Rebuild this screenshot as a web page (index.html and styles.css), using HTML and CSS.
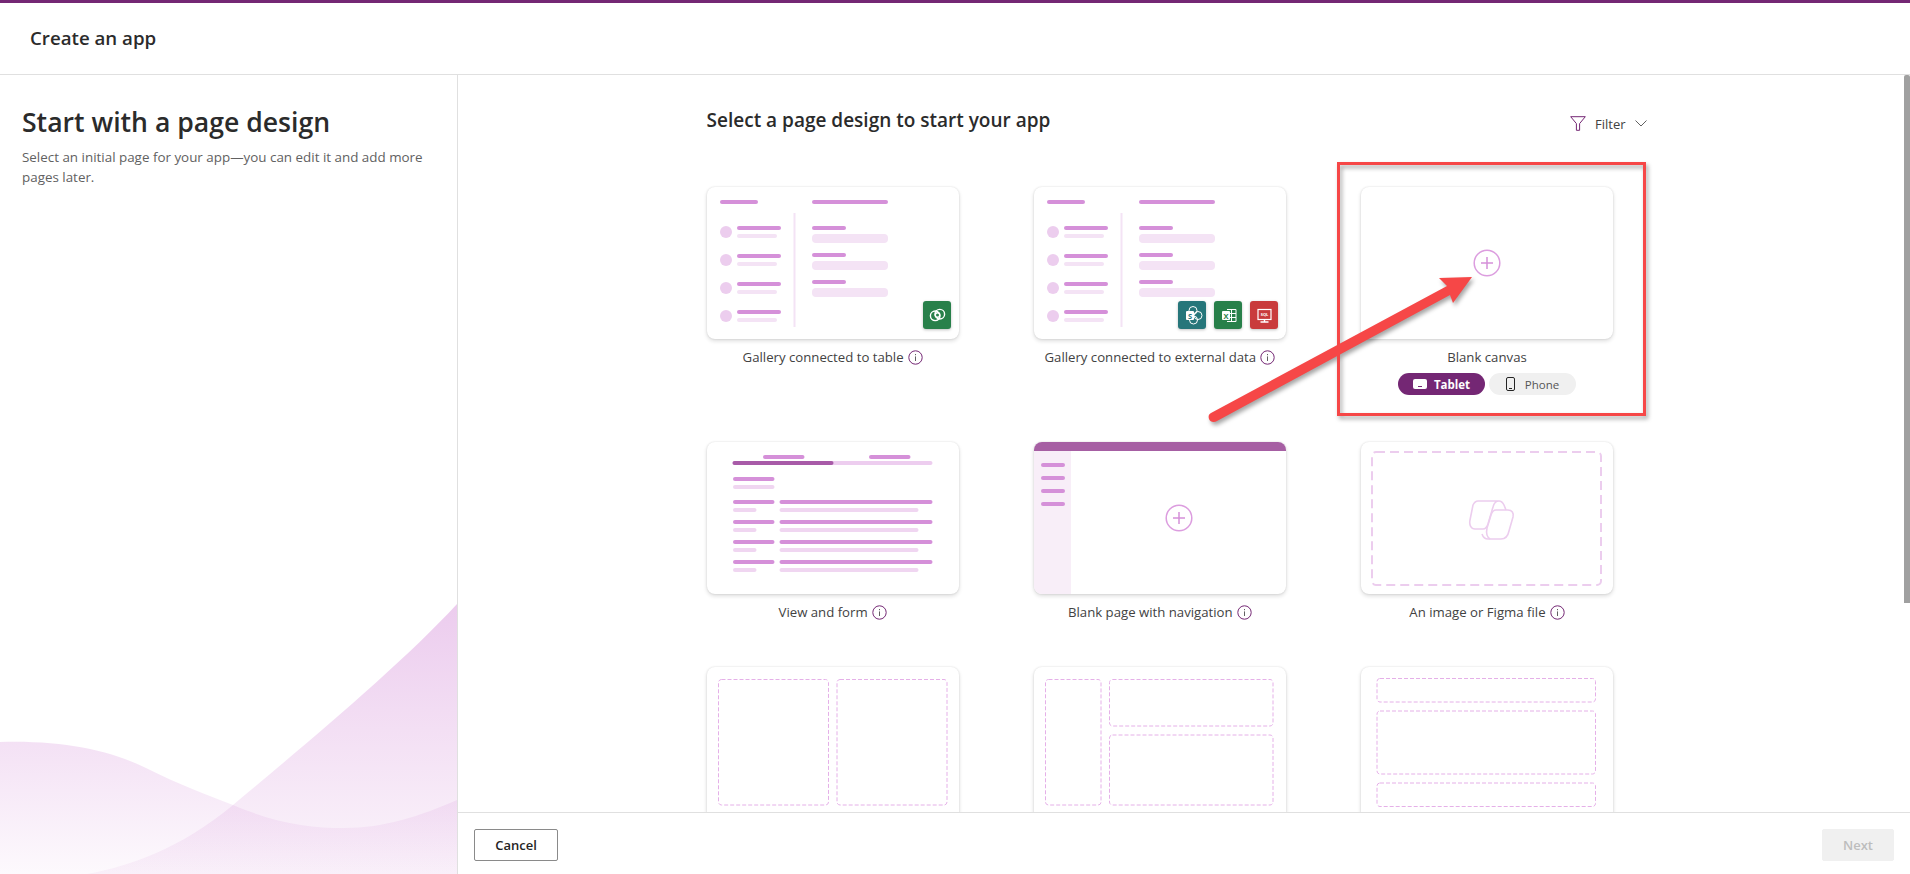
FILE: index.html
```html
<!DOCTYPE html>
<html lang="en">
<head>
  <meta charset="UTF-8">
  <title>Create an app</title>
  <link rel="stylesheet" href="styles.css">
</head>
<body>
  <!-- shared drawings -->
  <svg class="defs">
    <symbol id="info" viewBox="0 0 15 15">
      <circle cx="7.5" cy="7.5" r="6.7" fill="none" stroke="#742774" stroke-width="1"/>
      <rect x="7" y="6.4" width="1" height="4.6" fill="#616161"/>
      <rect x="7" y="4" width="1" height="1.2" fill="#616161"/>
    </symbol>
    <symbol id="plus" viewBox="0 0 28 28">
      <circle cx="14" cy="14" r="12.8" fill="none" stroke="#dc9ddf" stroke-width="1.5"/>
      <path d="M14 8v12M8 14h12" stroke="#d590d9" stroke-width="1.5"/>
    </symbol>
    <symbol id="gallery" viewBox="0 0 252 152">
      <g fill="#d590d9">
        <rect x="13" y="13" width="38" height="4" rx="2"/>
        <rect x="105" y="13" width="76" height="4" rx="2"/>
        <rect x="30" y="39" width="44" height="4" rx="2"/>
        <rect x="30" y="67" width="44" height="4" rx="2"/>
        <rect x="30" y="95" width="44" height="4" rx="2"/>
        <rect x="30" y="123" width="44" height="4" rx="2"/>
        <rect x="105" y="39" width="34" height="4" rx="2"/>
        <rect x="105" y="66" width="34" height="4" rx="2"/>
        <rect x="105" y="93" width="34" height="4" rx="2"/>
      </g>
      <g fill="#f4e3f5">
        <rect x="30" y="47" width="40" height="4" rx="2"/>
        <rect x="30" y="75" width="40" height="4" rx="2"/>
        <rect x="30" y="103" width="40" height="4" rx="2"/>
        <rect x="30" y="131" width="40" height="4" rx="2"/>
        <rect x="105" y="47" width="76" height="9" rx="4"/>
        <rect x="105" y="74" width="76" height="9" rx="4"/>
        <rect x="105" y="101" width="76" height="9" rx="4"/>
        <rect x="86.5" y="26" width="2" height="114"/>
      </g>
      <g fill="#eccdee">
        <circle cx="19" cy="45" r="6"/>
        <circle cx="19" cy="73" r="6"/>
        <circle cx="19" cy="101" r="6"/>
        <circle cx="19" cy="129" r="6"/>
      </g>
    </symbol>
    <symbol id="dataverse" viewBox="0 0 28 28">
      <g fill="none" stroke="#fff" stroke-width="1.4">
        <circle cx="12.200" cy="14.800" r="4.800"/>
        <circle cx="16.800" cy="13.200" r="4.800"/>
        <circle cx="14.500" cy="14" r="2.200"/>
      </g>
    </symbol>
    <symbol id="sharepoint" viewBox="0 0 28 28">
      <g fill="none" stroke="#fff" stroke-width="1">
        <circle cx="15" cy="9.5" r="4"/>
        <circle cx="20" cy="14.5" r="4"/>
        <circle cx="15.5" cy="19" r="4"/>
      </g>
      <rect x="8" y="10" width="8" height="9" rx="1" fill="#fff"/>
      <text x="12" y="17.5" class="glyph" fill="#26767a">S</text>
    </symbol>
    <symbol id="excel" viewBox="0 0 28 28">
      <path d="M13 8.5h9v12h-9M13 12.5h9M13 16.5h9M17.5 8.5v12" fill="none" stroke="#fff" stroke-width="1"/>
      <rect x="8" y="10" width="8" height="9" rx="1" fill="#fff"/>
      <text x="12" y="17.5" class="glyph" fill="#28804a">X</text>
    </symbol>
    <symbol id="sql" viewBox="0 0 28 28">
      <rect x="8" y="8.5" width="13" height="10" fill="none" stroke="#fff" stroke-width="1.2"/>
      <path d="M14.5 18.5v2M10.5 21h8" stroke="#fff" stroke-width="1.4"/>
      <text x="14.5" y="15" class="tiny" fill="#fff">SQL</text>
    </symbol>
  </svg>

  <div class="app">
    <header class="topbar">Create an app</header>

    <div class="body">
      <aside class="intro">
        <h1>Start with a page design</h1>
        <p>Select an initial page for your app—you can edit it and add more pages later.</p>
        <svg class="waves" viewBox="0 0 457 270">
          <defs>
            <linearGradient id="backFill" x1="0" y1="0" x2="0" y2="270" gradientUnits="userSpaceOnUse">
              <stop offset="0" stop-color="#ecccee"/>
              <stop offset="1" stop-color="#fbf5fb"/>
            </linearGradient>
            <linearGradient id="frontFill" x1="0" y1="138" x2="0" y2="270" gradientUnits="userSpaceOnUse">
              <stop offset="0" stop-color="#d590d9" stop-opacity=".27"/>
              <stop offset="1" stop-color="#d590d9" stop-opacity=".05"/>
            </linearGradient>
          </defs>
          <path fill="url(#backFill)" d="M457 0C400 62 300 145 233 201C180 245 130 262 87 270L457 270Z"/>
          <path fill="url(#frontFill)" d="M0 138C60 136 110 146 146 164C180 181 205 190 233 201C275 219 310 224 344 224C385 224 420 212 457 196L457 270L0 270Z"/>
        </svg>
      </aside>

      <main class="picker">
        <div class="scroller">
          <div class="picker-head">
            <h2>Select a page design to start your app</h2>
            <div class="filter">
              <svg class="filter-icon" viewBox="0 0 16 15"><path d="M.7.7h14.6L9.6 7.6v6.7H6.4V7.6z" fill="none" stroke="#742774" stroke-width="1"/></svg>
              <span>Filter</span>
              <svg class="chevron" viewBox="0 0 12 7"><path d="M.5.5 6 6 11.5.5" fill="none" stroke="#616161" stroke-width="1"/></svg>
            </div>
          </div>

          <div class="designs">
            <div class="design">
              <div class="thumb">
                <svg class="art"><use href="#gallery"/></svg>
                <div class="sources">
                  <svg class="source green"><use href="#dataverse"/></svg>
                </div>
              </div>
              <div class="label">Gallery connected to table <svg class="info"><use href="#info"/></svg></div>
            </div>

            <div class="design">
              <div class="thumb">
                <svg class="art"><use href="#gallery"/></svg>
                <div class="sources">
                  <svg class="source teal"><use href="#sharepoint"/></svg>
                  <svg class="source green"><use href="#excel"/></svg>
                  <svg class="source red"><use href="#sql"/></svg>
                </div>
              </div>
              <div class="label">Gallery connected to external data <svg class="info"><use href="#info"/></svg></div>
            </div>

            <div class="design">
              <div class="thumb thumb-center">
                <svg class="plus"><use href="#plus"/></svg>
              </div>
              <div class="label">Blank canvas</div>
              <div class="formats">
                <span class="format active">
                  <svg class="tablet-icon" viewBox="0 0 14 10"><rect width="14" height="10" rx="2" fill="#fff"/><rect x="5" y="7" width="4" height="1" fill="#742774"/></svg>
                  Tablet
                </span>
                <span class="format">
                  <svg class="phone-icon" viewBox="0 0 9 14"><rect x=".5" y=".5" width="8" height="13" rx="1.5" fill="none" stroke="#242424"/><rect x="3" y="11" width="3" height="1" fill="#242424"/></svg>
                  Phone
                </span>
              </div>
            </div>

            <div class="design">
              <div class="thumb">
                <svg class="art" viewBox="0 0 252 152">
                  <g fill="#d590d9">
                    <rect x="56" y="13" width="41.500" height="4" rx="2"/>
                    <rect x="162" y="13" width="41.500" height="4" rx="2"/>
                    <rect x="26" y="35" width="41.500" height="4" rx="2"/>
                    <rect x="26" y="58" width="41.500" height="4" rx="2"/>
                    <rect x="72.500" y="58" width="153" height="4" rx="2"/>
                    <rect x="26" y="78" width="41.500" height="4" rx="2"/>
                    <rect x="72.500" y="78" width="153" height="4" rx="2"/>
                    <rect x="26" y="98" width="41.500" height="4" rx="2"/>
                    <rect x="72.500" y="98" width="153" height="4" rx="2"/>
                    <rect x="26" y="118" width="41.500" height="4" rx="2"/>
                    <rect x="72.500" y="118" width="153" height="4" rx="2"/>
                  </g>
                  <rect x="25.500" y="19" width="200" height="4" rx="2" fill="#edcdef"/>
                  <rect x="25.500" y="19" width="101" height="4" rx="2" fill="#a85ba8"/>
                  <g fill="#f0d6f1">
                    <rect x="26" y="43" width="41.500" height="4" rx="2"/>
                    <rect x="26" y="66" width="23.500" height="4" rx="2"/>
                    <rect x="72.500" y="66" width="139" height="4" rx="2"/>
                    <rect x="26" y="86" width="23.500" height="4" rx="2"/>
                    <rect x="72.500" y="86" width="139" height="4" rx="2"/>
                    <rect x="26" y="106" width="23.500" height="4" rx="2"/>
                    <rect x="72.500" y="106" width="139" height="4" rx="2"/>
                    <rect x="26" y="126" width="23.500" height="4" rx="2"/>
                    <rect x="72.500" y="126" width="139" height="4" rx="2"/>
                  </g>
                </svg>
              </div>
              <div class="label">View and form <svg class="info"><use href="#info"/></svg></div>
            </div>

            <div class="design">
              <div class="thumb">
                <svg class="art" viewBox="0 0 252 152">
                  <rect x="0" y="9" width="37" height="143" fill="#f8eef8"/>
                  <rect width="252" height="9" fill="#a65fa3"/>
                  <g fill="#d590d9">
                    <rect x="7" y="21" width="24" height="4" rx="2"/>
                    <rect x="7" y="34" width="24" height="4" rx="2"/>
                    <rect x="7" y="47" width="24" height="4" rx="2"/>
                    <rect x="7" y="60" width="24" height="4" rx="2"/>
                  </g>
                  <use href="#plus" x="131" y="62" width="28" height="28"/>
                </svg>
              </div>
              <div class="label">Blank page with navigation <svg class="info"><use href="#info"/></svg></div>
            </div>

            <div class="design">
              <div class="thumb">
                <svg class="art" viewBox="0 0 252 152">
                  <rect x="11" y="10" width="229" height="133" rx="4" fill="none" stroke="#eccdee" stroke-width="2" stroke-dasharray="9 5"/>
                  <g fill="none" stroke="#eccdee" stroke-width="1.600" transform="translate(99 48)">
                    <path d="M18 11H39C36 11 34 13 33 17L28 34C27 37 26 39 23 39H15C11 39 9 35 10 30L13 15C14 13 15 11 18 11Z"/>
                    <path d="M39 11C41 11 43 13 44 15L46 20"/>
                    <path d="M36 20H48C52 20 54 23 53 27L49 41C48 46 45 49 41 49H28C25 49 23 47 22 44"/>
                    <path d="M36 20C33 20 32 22 31 25L27 38C26 43 27 47 30 49"/>
                  </g>
                </svg>
              </div>
              <div class="label">An image or Figma file <svg class="info"><use href="#info"/></svg></div>
            </div>

            <div class="design">
              <div class="thumb">
                <svg class="art" viewBox="0 0 252 152">
                  <g class="slot">
                    <rect x="11.500" y="12.500" width="110" height="125.500" rx="3"/>
                    <rect x="130" y="12.500" width="110" height="125.500" rx="3"/>
                  </g>
                </svg>
              </div>
            </div>

            <div class="design">
              <div class="thumb">
                <svg class="art" viewBox="0 0 252 152">
                  <g class="slot">
                    <rect x="11.500" y="12.500" width="55.500" height="125.500" rx="3"/>
                    <rect x="75.500" y="12.500" width="163.500" height="46.500" rx="3"/>
                    <rect x="75.500" y="68" width="163.500" height="70" rx="3"/>
                  </g>
                </svg>
              </div>
            </div>

            <div class="design">
              <div class="thumb">
                <svg class="art" viewBox="0 0 252 152">
                  <g class="slot">
                    <rect x="16" y="11.500" width="218.500" height="23.500" rx="3"/>
                    <rect x="16" y="44" width="218.500" height="63" rx="3"/>
                    <rect x="16" y="116" width="218.500" height="23.500" rx="3"/>
                  </g>
                </svg>
              </div>
            </div>
          </div>
        </div>

        <footer class="actions">
          <button class="btn">Cancel</button>
          <button class="btn btn-next" disabled>Next</button>
        </footer>
        <div class="scrollbar"></div>
      </main>
    </div>

    <!-- red call-out painted on top of the screenshot -->
    <svg class="callout" viewBox="0 0 1910 874">
      <rect x="1338.500" y="163.500" width="306" height="251" fill="none" stroke="#f64747" stroke-width="3"/>
      <path fill="#f64747" d="M1211 413L1447 286L1439 278L1472 277L1453 303L1450 295L1217 421C1214 423 1210 422 1209 419C1208 416 1209 414 1211 413Z"/>
    </svg>
  </div>
</body>
</html>
```

FILE: styles.css
```css
* {
  box-sizing: border-box;
}
html, body {
  margin: 0;
  height: 100%;
  overflow: hidden;
}
body {
  font-family: "Open Sans", "Noto Sans", Arial, sans-serif;
  color: #242424;
  background: #fff;
}
.defs {
  display: none;
}
.glyph {
  font: 700 7.5px "Open Sans", sans-serif;
  text-anchor: middle;
}
.tiny {
  font: 700 4px "Open Sans", sans-serif;
  text-anchor: middle;
}
.app {
  position: relative;
  display: flex;
  flex-direction: column;
  height: 874px;
}
.topbar {
  flex: none;
  height: 75px;
  padding: 0 0 2px 30px;
  display: flex;
  align-items: center;
  border-top: 3px solid #742774;
  border-bottom: 1px solid #e0e0e0;
  font-size: 18.700px;
  font-weight: 600;
  color: #2b2b2b;
}
.body {
  flex: 1;
  display: flex;
  min-height: 0;
}

/* left column */
.intro {
  flex: none;
  width: 458px;
  display: flex;
  flex-direction: column;
  border-right: 1px solid #e0e0e0;
  padding-top: 29px;
}
.intro h1 {
  margin: 0 22px;
  font-size: 26.600px;
  line-height: 36px;
  font-weight: 600;
  color: #2b2b2b;
}
.intro p {
  margin: 7px 22px 0;
  font-size: 13.400px;
  line-height: 20px;
  color: #616161;
}
.waves {
  display: block;
  margin-top: auto;
  width: 457px;
  height: 270px;
}

/* right column */
.picker {
  flex: 1;
  min-width: 0;
  position: relative;
  display: flex;
  flex-direction: column;
}
.scroller {
  flex: 1;
  min-height: 0;
  overflow: hidden;
  padding: 31px 0 0 248.600px;
}
.picker-head {
  width: 940px;
  height: 28px;
  display: flex;
  align-items: center;
  justify-content: space-between;
}
.picker-head h2 {
  margin: 0;
  font-size: 19px;
  line-height: 28px;
  font-weight: 600;
  color: #2b2b2b;
}
.filter {
  display: flex;
  align-items: center;
  gap: 9px;
  font-size: 13px;
  color: #424242;
  margin-top: 7px;
}
.filter-icon {
  width: 16px;
  height: 15px;
}
.chevron {
  width: 12px;
  height: 7px;
}
.designs {
  display: grid;
  grid-template-columns: repeat(3, 252px);
  column-gap: 75.200px;
  row-gap: 45px;
  margin-top: 53px;
}
.design {
  display: flex;
  flex-direction: column;
  align-items: center;
}
.thumb {
  position: relative;
  width: 252px;
  height: 152px;
  flex: none;
  background: #fff;
  border-radius: 8px;
  overflow: hidden;
  box-shadow: 0 0 2px rgba(0,0,0,0.12), 0 2px 4px rgba(0,0,0,0.14);
}
.thumb-center {
  display: flex;
  align-items: center;
  justify-content: center;
}
.art {
  display: block;
  width: 252px;
  height: 152px;
}
.plus {
  width: 28px;
  height: 28px;
}
.slot rect {
  fill: none;
  stroke: #e5b0e8;
  stroke-width: 1;
  stroke-dasharray: 4 2;
}
.sources {
  position: absolute;
  right: 8px;
  bottom: 10px;
  display: flex;
  gap: 8px;
}
.source {
  width: 28px;
  height: 28px;
  border-radius: 3px;
  box-shadow: 0 1px 3px rgba(0,0,0,0.25);
}
.green {
  background: #28804a;
}
.teal {
  background: #26767a;
}
.red {
  background: #c93b3c;
}
.label {
  margin-top: 8px;
  height: 20px;
  display: flex;
  align-items: center;
  gap: 4px;
  font-size: 13.200px;
  color: #424242;
  white-space: nowrap;
}
.info {
  width: 15px;
  height: 15px;
}
.formats {
  display: flex;
  gap: 4px;
  margin: 6px 0 2px;
}
.format {
  width: 87px;
  height: 22px;
  display: flex;
  align-items: center;
  justify-content: center;
  gap: 7px;
  border-radius: 11px;
  background: #f0f0f0;
  font-size: 11.500px;
  color: #555;
}
.format.active {
  background: #742774;
  color: #fff;
  font-weight: 700;
}
.tablet-icon {
  width: 14px;
  height: 10px;
}
.phone-icon {
  width: 9px;
  height: 14px;
  margin-right: 3px;
}
.actions {
  flex: none;
  height: 62px;
  padding: 16px 16px 0;
  display: flex;
  justify-content: space-between;
  align-items: flex-start;
  border-top: 1px solid #e0e0e0;
  background: #fff;
}
.btn {
  width: 84px;
  height: 32px;
  padding: 0;
  font-family: inherit;
  font-size: 13px;
  font-weight: 600;
  color: #242424;
  background: #fff;
  border: 1px solid #8a8a8a;
  border-radius: 2px;
}
.btn-next {
  width: 72px;
  color: #bdbdbd;
  background: #f0f0f0;
  border-color: #f0f0f0;
}
.scrollbar {
  position: absolute;
  top: 0;
  right: 0;
  width: 6px;
  height: 528px;
  background: #a0a0a0;
  border-radius: 2px 2px 0 0;
}
.callout {
  position: absolute;
  left: 0;
  top: 0;
  width: 1910px;
  height: 874px;
  pointer-events: none;
  filter: drop-shadow(2px 3px 2px rgba(0,0,0,0.35));
}
```
